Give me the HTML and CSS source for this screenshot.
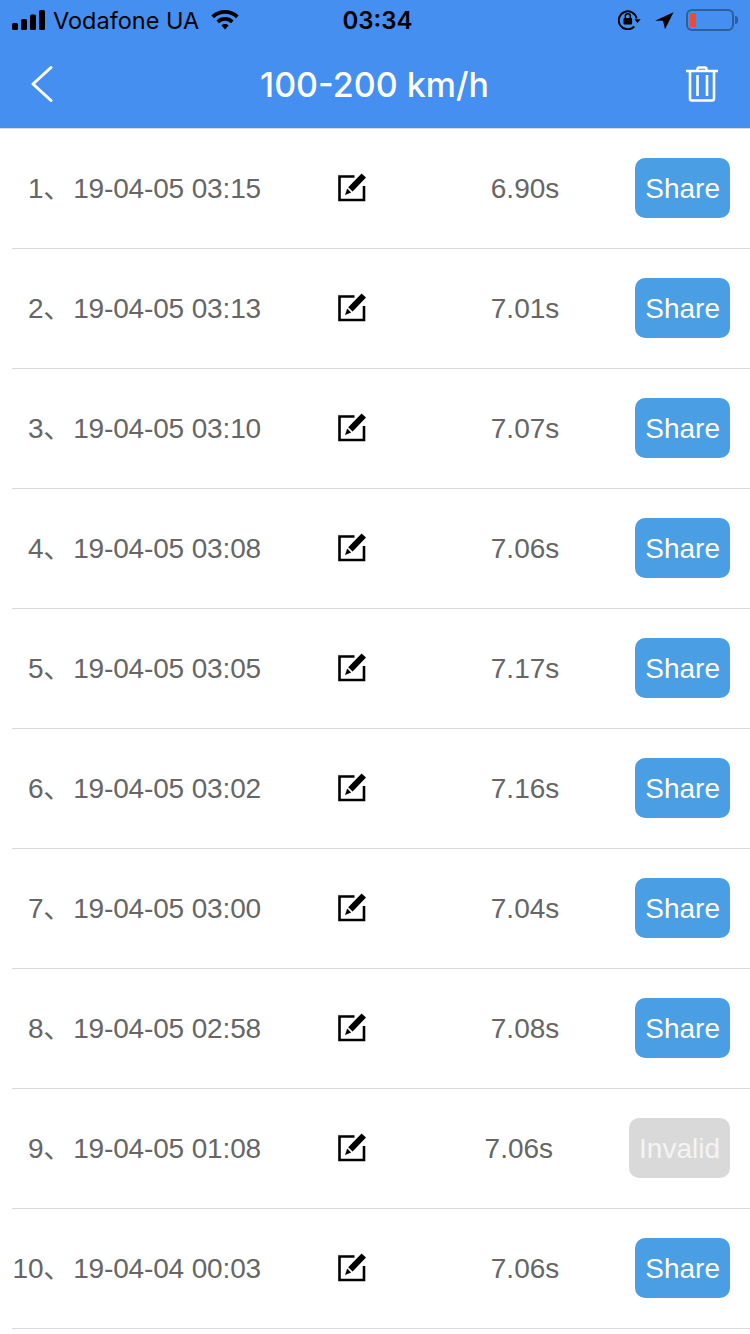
FILE: index.html
```html
<!DOCTYPE html>
<html lang="en">
<head>
    <meta charset="UTF-8">
    <meta name="viewport" content="width=device-width, initial-scale=1.0">
    <title>100-200 km/h</title>
    <link rel="stylesheet" href="styles.css">
</head>
<body>
    <svg class="icon-defs" width="0" height="0">
        <symbol id="edit" viewBox="0 0 30 30">
            <path d="M17.5 4.500H2.500V28H27V14" fill="none" stroke="#000" stroke-width="2.600"/>
            <path d="M24.600 1.400L29 5.600L15.600 19.400L11.200 15.200Z" fill="#000"/>
            <path d="M10.200 16.600L14.200 20.600L8 23Z" fill="#000"/>
        </symbol>
    </svg>

    <header class="header">
        <div class="status-bar">
            <div class="status-left">
                <svg class="signal" width="34" height="20" viewBox="0 0 34 20">
                    <rect x="0" y="13" width="6" height="7" rx="1.500"/>
                    <rect x="9" y="9" width="6" height="11" rx="1.500"/>
                    <rect x="18" y="4.500" width="6" height="15.500" rx="1.500"/>
                    <rect x="27" y="0" width="6" height="20" rx="1.500"/>
                </svg>
                <span class="carrier">Vodafone UA</span>
                <svg class="wifi" width="28" height="20" viewBox="0 0 28 20">
                    <path d="M14 0C8.800 0 4 2 .4 5.400L3 8.200C5.900 5.400 9.800 3.800 14 3.800S22.100 5.400 25 8.200L27.600 5.400C24 2 19.200 0 14 0Z"/>
                    <path d="M14 7C10.700 7 7.700 8.200 5.400 10.400L8 13.200C9.600 11.700 11.700 10.800 14 10.800S18.400 11.700 20 13.200L22.600 10.400C20.300 8.200 17.300 7 14 7Z"/>
                    <path d="M14 14C12.700 14 11.500 14.500 10.500 15.400L14 19.600L17.500 15.400C16.500 14.500 15.300 14 14 14Z"/>
                </svg>
            </div>
            <span class="clock">03:34</span>
            <div class="status-right">
                <svg class="lock" width="23" height="20" viewBox="0 0 23 20">
                    <path d="M18.600 8.500A9 9 0 1 0 16.300 16.500" fill="none" stroke="#000" stroke-width="1.900"/>
                    <path d="M16.500 9.300H22.700L19.500 13Z"/>
                    <rect x="5.500" y="8" width="8.600" height="6.500" rx="1"/>
                    <path d="M7.300 8.500V6.300A2.500 2.500 0 0 1 12.300 6.300V8.500" fill="none" stroke="#000" stroke-width="1.500"/>
                </svg>
                <svg class="arrow" width="19" height="20" viewBox="0 0 19 20">
                    <path d="M18.500 2.300L0 10.700L8 10.700L10 19.300Z"/>
                </svg>
                <div class="battery">
                    <div class="battery-body"><div class="battery-level"></div></div>
                    <div class="battery-tip"></div>
                </div>
            </div>
        </div>
        <nav class="nav-bar">
            <svg class="back" width="24" height="38" viewBox="0 0 24 38">
                <path d="M21 2.500L3 19L21 35.500" fill="none" stroke="#fff" stroke-width="3" stroke-linecap="round" stroke-linejoin="round"/>
            </svg>
            <h1 class="title">100-200 km/h</h1>
            <svg class="trash" width="34" height="36" viewBox="0 0 34 36">
                <path d="M1 5H33M12.500 4.500V3Q12.500 1.500 14 1.500H20Q21.500 1.500 21.500 3V4.500" fill="none" stroke="#fff" stroke-width="2.400"/>
                <path d="M5 6V32.500Q5 34.500 7 34.500H27Q29 34.500 29 32.500V6" fill="none" stroke="#fff" stroke-width="2.600"/>
                <path d="M12.500 9V30M22 9V30" fill="none" stroke="#fff" stroke-width="2.600"/>
            </svg>
        </nav>
    </header>

    <main class="record-list">
        <div class="record">
            <span class="record-label"><span class="record-no">1、</span>19-04-05 03:15</span>
            <svg class="edit-icon"><use href="#edit"/></svg>
            <div class="record-end"><span class="record-time">6.90s</span><button class="btn">Share</button></div>
        </div>
        <div class="record">
            <span class="record-label"><span class="record-no">2、</span>19-04-05 03:13</span>
            <svg class="edit-icon"><use href="#edit"/></svg>
            <div class="record-end"><span class="record-time">7.01s</span><button class="btn">Share</button></div>
        </div>
        <div class="record">
            <span class="record-label"><span class="record-no">3、</span>19-04-05 03:10</span>
            <svg class="edit-icon"><use href="#edit"/></svg>
            <div class="record-end"><span class="record-time">7.07s</span><button class="btn">Share</button></div>
        </div>
        <div class="record">
            <span class="record-label"><span class="record-no">4、</span>19-04-05 03:08</span>
            <svg class="edit-icon"><use href="#edit"/></svg>
            <div class="record-end"><span class="record-time">7.06s</span><button class="btn">Share</button></div>
        </div>
        <div class="record">
            <span class="record-label"><span class="record-no">5、</span>19-04-05 03:05</span>
            <svg class="edit-icon"><use href="#edit"/></svg>
            <div class="record-end"><span class="record-time">7.17s</span><button class="btn">Share</button></div>
        </div>
        <div class="record">
            <span class="record-label"><span class="record-no">6、</span>19-04-05 03:02</span>
            <svg class="edit-icon"><use href="#edit"/></svg>
            <div class="record-end"><span class="record-time">7.16s</span><button class="btn">Share</button></div>
        </div>
        <div class="record">
            <span class="record-label"><span class="record-no">7、</span>19-04-05 03:00</span>
            <svg class="edit-icon"><use href="#edit"/></svg>
            <div class="record-end"><span class="record-time">7.04s</span><button class="btn">Share</button></div>
        </div>
        <div class="record">
            <span class="record-label"><span class="record-no">8、</span>19-04-05 02:58</span>
            <svg class="edit-icon"><use href="#edit"/></svg>
            <div class="record-end"><span class="record-time">7.08s</span><button class="btn">Share</button></div>
        </div>
        <div class="record">
            <span class="record-label"><span class="record-no">9、</span>19-04-05 01:08</span>
            <svg class="edit-icon"><use href="#edit"/></svg>
            <div class="record-end"><span class="record-time">7.06s</span><button class="btn btn-invalid">Invalid</button></div>
        </div>
        <div class="record">
            <span class="record-label"><span class="record-no">10、</span>19-04-04 00:03</span>
            <svg class="edit-icon"><use href="#edit"/></svg>
            <div class="record-end"><span class="record-time">7.06s</span><button class="btn">Share</button></div>
        </div>
    </main>
</body>
</html>
```

FILE: styles.css
```css
body {
    margin: 0;
    padding: 0;
    background-color: #fff;
    color: #666;
    font-family: "Liberation Sans", "Noto Sans CJK SC", sans-serif;
    overflow: hidden;
}

.icon-defs {
    display: block;
    height: 0;
}

/* header */
.header {
    background-color: #448fef;
    border-bottom: 1px solid #d9d9d9;
}

.status-bar {
    position: relative;
    display: flex;
    justify-content: space-between;
    align-items: center;
    height: 40px;
    padding: 0 12px;
    color: #000;
    font-family: Inter, "Liberation Sans", sans-serif;
}

.status-left,
.status-right {
    display: flex;
    align-items: center;
}

.signal {
    margin-right: 7px;
}

.carrier {
    font-size: 23.500px;
    margin-right: 12px;
}

.clock {
    position: absolute;
    left: 5px;
    right: 0;
    text-align: center;
    font-size: 24px;
    font-weight: 600;
    pointer-events: none;
}

.status-right {
    gap: 12px;
}

.lock {
    margin-right: 2px;
}

.battery {
    display: flex;
    align-items: center;
}

.battery-body {
    box-sizing: border-box;
    width: 48px;
    height: 22px;
    padding: 2px;
    border: 2px solid #2b5f9e;
    border-radius: 6px;
}

.battery-level {
    width: 6px;
    height: 100%;
    background-color: #ee4b35;
}

.battery-tip {
    width: 3px;
    height: 8px;
    margin-left: 1px;
    background-color: #2b5f9e;
    border-radius: 0 3px 3px 0;
}

.nav-bar {
    display: flex;
    justify-content: space-between;
    align-items: center;
    height: 88px;
    padding: 0 31px 0 30px;
}

.back {
    margin-right: 10px;
}

.title {
    margin: 0;
    color: #fff;
    font-family: Inter, "Liberation Sans", sans-serif;
    font-size: 34px;
    font-weight: 500;
}

/* list */
.record {
    display: flex;
    align-items: center;
    height: 118px;
    margin-left: 12px;
    padding-right: 20px;
    padding-bottom: 1px;
    border-bottom: 1px solid #d9d9d9;
    font-size: 28px;
}

.record-label {
    width: 249px;
    padding-top: 2px;
    line-height: 32px;
    letter-spacing: -0.150px;
    text-align: right;
    white-space: nowrap;
}

.record-no {
    margin-right: 2px;
}

.edit-icon {
    width: 30px;
    height: 30px;
    margin-left: 76px;
    margin-bottom: 2px;
}

.record-end {
    display: flex;
    align-items: center;
    gap: 76px;
    margin-left: auto;
}

.record-time {
    padding-top: 2px;
}

.btn {
    height: 60px;
    padding: 2px 10px 0;
    border: 0;
    border-radius: 10px;
    background-color: #4a9ee3;
    color: #fff;
    font-family: inherit;
    font-size: 28px;
}

.btn-invalid {
    background-color: #d9d9d9;
    color: #f4f4f4;
}
```
